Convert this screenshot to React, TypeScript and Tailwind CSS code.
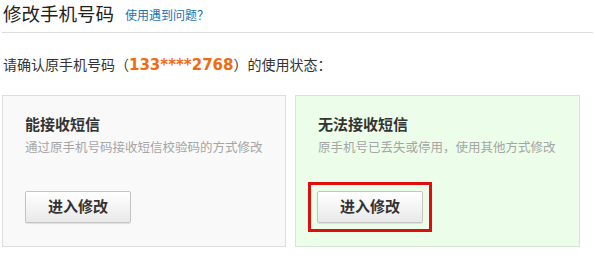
import { useState } from 'react'

type Option = {
  title: string
  desc: string
  highlight?: boolean
}

const options: Option[] = [
  { title: '能接收短信', desc: '通过原手机号码接收短信校验码的方式修改' },
  { title: '无法接收短信', desc: '原手机号已丢失或停用，使用其他方式修改', highlight: true }
]

function OptionCard({ title, desc, highlight }: Option) {
  return (
    <div
      className={`flex h-[152px] flex-col border pl-[22px] pt-[19px] ${
        highlight ? 'w-[285px] border-[#d6e6d3] bg-[#ecfeea]' : 'w-[284px] border-[#dedede] bg-[#f9f9f9]'
      }`}
    >
      <h3 className="text-[15px] font-bold leading-[20px] text-[#333]">{title}</h3>
      <p className="mt-[4px] text-[12.5px] leading-[18px] text-[#a5a5a5]">{desc}</p>
      <div className="mt-[34px] flex">
        <div className={highlight ? 'ml-[-10px] mt-[-9px] border-[3px] border-[#e00d0d] px-[6px] py-[6px]' : ''}>
          <button className="h-[32px] w-[106px] rounded-[2px] border border-[#c4c4c4] bg-gradient-to-b from-white to-[#e9e9e9] text-[15px] font-bold text-[#333] shadow-[0_1px_1px_rgba(0,0,0,0.1)]">
            进入修改
          </button>
        </div>
      </div>
    </div>
  )
}

export default function App() {
  const [phone] = useState('133****2768')

  return (
    <div
      className="h-[259px] w-[595px] bg-white px-[2px] text-[#333]"
      style={{ fontFamily: '"Liberation Sans", "Noto Sans CJK SC", sans-serif' }}
    >
      <div className="flex h-[33px] items-center gap-[11px] border-b border-[#dddddd] pb-[2px] pl-[1px]">
        <h1 className="text-[18.5px] leading-[24px] text-[#222]">修改手机号码</h1>
        <a href="#" className="mt-[2px] text-[12px] text-[#1a72b4]">使用遇到问题？</a>
      </div>

      <p className="mt-[21px] pl-[1px] text-[14px] leading-[22px] text-[#333]">
        请确认原手机号码（
        <span className="font-['DejaVu_Sans'] text-[15px] font-bold text-[#f06a12]">{phone}</span>
        ）的使用状态：
      </p>

      <div className="mt-[19px] flex gap-[9px]">
        {options.map((o) => (
          <OptionCard key={o.title} {...o} />
        ))}
      </div>
    </div>
  )
}
